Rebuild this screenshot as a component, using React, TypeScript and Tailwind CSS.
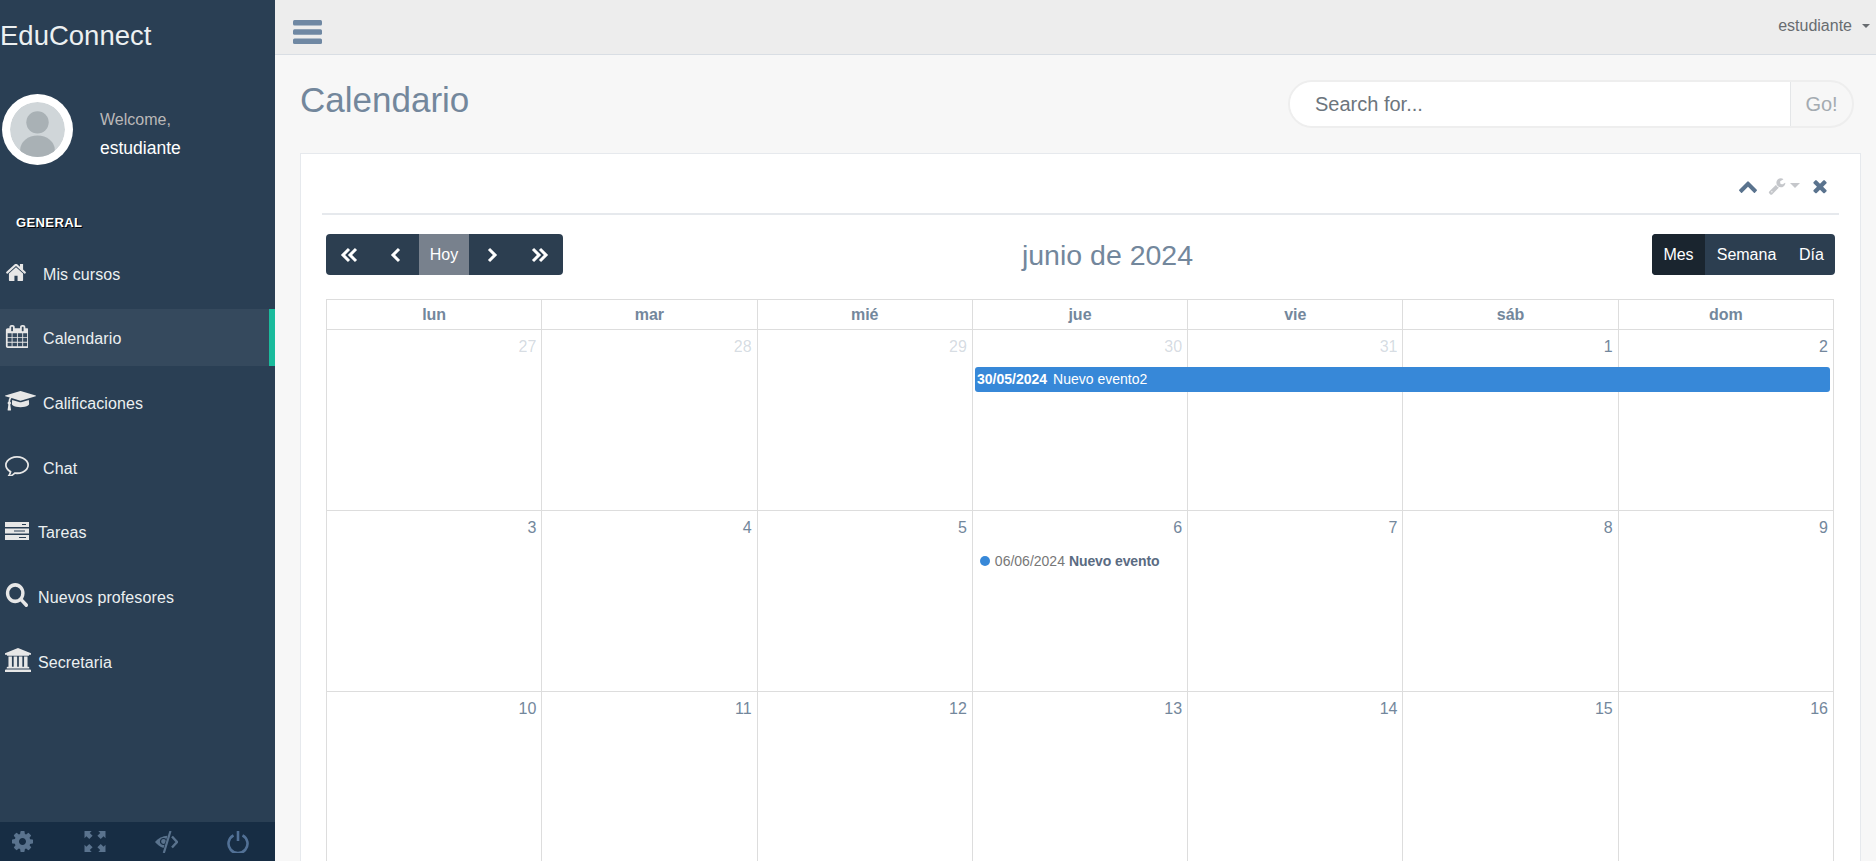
import type { ReactNode } from 'react'

function Glyph({ d, box = '0 0 1792 1792', className }: { d: string; box?: string; className: string }) {
  return (
    <svg viewBox={box} className={className} fill="currentColor" preserveAspectRatio="none">
      <path d={d} />
    </svg>
  )
}

const HOME = 'M1472 992v480q0 26-19 45t-45 19h-384v-384h-256v384h-384q-26 0-45-19t-19-45v-480q0-1 .5-3t.5-3l575-474 575 474q1 2 1 6zm223-69l-62 74q-8 9-21 11h-3q-13 0-21-7l-692-577-692 577q-12 8-24 7-13-2-21-11l-62-74q-8-10-7-23.5t11-21.5l719-599q32-26 76-26t76 26l244 204v-195q0-14 9-23t23-9h192q14 0 23 9t9 23v408l219 182q10 8 11 21.5t-7 23.5z'
const CALENDAR = 'M192 1664h288v-288h-288v288zm352 0h320v-288h-320v288zm-352-352h288v-320h-288v320zm352 0h320v-320h-320v320zm-352-384h288v-288h-288v288zm736 736h320v-288h-320v288zm-384-736h320v-288h-320v288zm768 736h288v-288h-288v288zm-384-352h320v-320h-320v320zm-352-864v-288q0-13-9.5-22.5t-22.5-9.5h-64q-13 0-22.5 9.5t-9.5 22.5v288q0 13 9.5 22.5t22.5 9.5h64q13 0 22.5-9.5t9.5-22.5zm736 864h288v-320h-288v320zm-384-384h320v-288h-320v288zm384 0h288v-288h-288v288zm32-480v-288q0-13-9.5-22.5t-22.5-9.5h-64q-13 0-22.5 9.5t-9.5 22.5v288q0 13 9.5 22.5t22.5 9.5h64q13 0 22.5-9.5t9.5-22.5zm384-64v1280q0 52-38 90t-90 38h-1408q-52 0-90-38t-38-90v-1280q0-52 38-90t90-38h128v-96q0-66 47-113t113-47h64q66 0 113 47t47 113v96h384v-96q0-66 47-113t113-47h64q66 0 113 47t47 113v96h128q52 0 90 38t38 90z'
const CAP = 'M1774 836l18 316q4 69-82 128t-235 93.5-323 34.5-323-34.5-235-93.5-82-128l18-316 574 181q22 7 48 7t48-7zm530-324q0 23-22 31l-1120 352q-4 1-10 1t-10-1l-652-206q-43 34-71 111.5t-34 178.5q63 36 63 109 0 69-58 107l58 433q2 14-8 25-9 11-24 11h-192q-15 0-24-11-10-11-8-25l58-433q-58-38-58-107 0-73 65-111 11-207 98-330l-333-104q-22-8-22-31t22-31l1120-352q4-1 10-1t10 1l1120 352q22 8 22 31z'
const COMMENT = 'M896 384q-204 0-381.5 69.5t-282 187.5-104.5 255q0 112 71.5 213.5t201.5 175.5l87 50-27 96q-24 91-70 172 152-63 275-171l43-38 57 6q69 8 130 8 204 0 381.5-69.5t282-187.5 104.5-255-104.5-255-282-187.5-381.500-69.500zm896 512q0 174-120 321.500t-326 233-450 85.500q-70 0-145-8-198 175-460 242-49 14-114 22h-5q-15 0-27-10.500t-16-27.500v-1q-3-4-.5-12t2-10 4.500-9.500l6-9 7-8.500 8-9q7-8 31-34.500t34.500-38 31-39.500 32.500-51 27-59 26-76q-157-89-247.500-220t-90.500-281q0-174 120-321.500t326-233 450-85.500 450 85.500 326 233 120 321.500z'
const SEARCH = 'M1216 832q0-185-131.500-316.500t-316.500-131.500-316.500 131.500-131.500 316.500 131.500 316.500 316.500 131.500 316.500-131.500 131.500-316.500zm512 832q0 52-38 90t-90 38q-54 0-90-38l-343-342q-179 124-399 124-143 0-273.500-55.500t-225-150-150-225-55.500-273.500 55.500-273.500 150-225 225-150 273.500-55.500 273.500 55.500 225 150 150 225 55.500 273.500q0 220-124 399l343 343q37 37 37 90z'
const BANK = 'M960 0l960 384v128h-128q0 26-20.500 45t-48.500 19h-1526q-28 0-48.500-19t-20.500-45h-128v-128zm-704 640h256v768h128v-768h256v768h128v-768h256v768h128v-768h256v768h59q28 0 48.500 19t20.500 45v64h-1664v-64q0-26 20.500-45t48.500-19h59v-768zm1595 960q28 0 48.500 19t20.500 45v128h-1920v-128q0-26 20.500-45t48.500-19h1782z'
const CHEVRON_UP = 'M1683 1331l-166 165q-19 19-45 19t-45-19l-531-531-531 531q-19 19-45 19t-45-19l-166-165q-19-19-19-45.500t19-45.500l742-741q19-19 45-19t45 19l742 741q19 19 19 45.500t-19 45.500z'
const WRENCH = 'M448 1472q0-26-19-45t-45-19-45 19-19 45 19 45 45 19 45-19 19-45zm644-420l-682 682q-37 37-90 37-52 0-91-37l-106-108q-38-36-38-90 0-53 38-91l681-681q39 98 114.500 173.500t173.500 114.500zm634-435q0 39-23 106-47 134-164.500 217.500t-258.500 83.500q-185 0-316.500-131.500t-131.500-316.500 131.500-316.500 316.500-131.500q58 0 121.500 16.500t107.500 46.500q16 11 16 28t-16 28l-293 169v224l193 107q5-3 79-48.500t135.500-81 70.500-35.500q15 0 23.500 10t8.500 25z'
const CLOSE = 'M1490 1322q0 40-28 68l-136 136q-28 28-68 28t-68-28l-294-294-294 294q-28 28-68 28t-68-28l-136-136q-28-28-28-68t28-68l294-294-294-294q-28-28-28-68t28-68l136-136q28-28 68-28t68 28l294 294 294-294q28-28 68-28t68 28l136 136q28 28 28 68t-28 68l-294 294 294 294q28 28 28 68z'
const COG = 'M1152 896q0-106-75-181t-181-75-181 75-75 181 75 181 181 75 181-75 75-181zm512-109v222q0 12-8 23t-20 13l-185 28q-19 54-39 91 35 50 107 138 10 12 10 25t-9 23q-27 37-99 108t-94 71q-12 0-26-9l-138-108q-44 23-91 38-16 136-29 186-7 28-36 28h-222q-14 0-24.500-8.500t-11.500-21.500l-28-184q-49-16-90-37l-141 107q-10 9-25 9-14 0-25-11-126-114-165-168-7-10-7-23 0-12 8-23 15-21 51-66.500t54-70.500q-27-50-41-99l-183-27q-13-2-21-12.500t-8-23.500v-222q0-12 8-23t19-13l186-28q14-46 39-92-40-57-107-138-10-12-10-24 0-10 9-23 26-36 98.500-107.500t94.500-71.500q13 0 26 10l138 107q44-23 91-38 16-136 29-186 7-28 36-28h222q14 0 24.500 8.500t11.500 21.500l28 184q49 16 90 37l142-107q9-9 24-9 13 0 25 10 129 119 165 170 7 8 7 22 0 12-8 23-15 21-51 66.500t-54 70.500q26 50 41 98l183 28q13 2 21 12.500t8 23.500z'

function BarsIcon() {
  return (
    <svg viewBox="0 0 29 24" className="mt-[9px] w-[29px] h-[24px] text-[#6F88A3]" fill="currentColor">
      <rect y="0" width="29" height="5.500" rx="1.500" />
      <rect y="9.300" width="29" height="5.500" rx="1.500" />
      <rect y="18.500" width="29" height="5.500" rx="1.500" />
    </svg>
  )
}

function ServerIcon() {
  return (
    <svg viewBox="0 0 24 18" className="w-[24px] h-[18px]" fill="currentColor">
      <path fillRule="evenodd" d="M0 0h24v5H0Zm17 2v1h4V2ZM0 6.500h24v5H0Zm9 2v1h11v-1ZM0 13h24v5H0Zm14 2v1h7v-1Z" />
    </svg>
  )
}

function FullscreenIcon() {
  return (
    <svg viewBox="0 0 22 22" className="ml-[2px] w-[22px] h-[21px]" fill="currentColor">
      <path d="M0 0h7.500L5.500 2 8.500 5 5 8.500 2 5.500 0 7.500ZM22 0v7.500l-2-2-3 3L13.500 5l3-3-2-2ZM0 22v-7.500l2 2 3-3L8.500 17l-3 3 2 2ZM22 22h-7.500l2-2-3-3 3.500-3.500 3 3 2-2Z" />
    </svg>
  )
}

function EyeCloseIcon() {
  return (
    <svg viewBox="0 0 23 22" className="w-[23px] h-[22px]">
      <path d="M0 11C3 7.500 7.500 5 12.500 4.800L8.500 17C5 16 2 13.500 0 11Z" fill="currentColor" />
      <circle cx="8.500" cy="10.500" r="3" fill="none" stroke="#172D44" strokeWidth="1.200" />
      <path d="M17 5.500 22 11l-5 5.500" fill="none" stroke="currentColor" strokeWidth="2.400" />
      <path d="M15.500 0 8.800 22" fill="none" stroke="currentColor" strokeWidth="2.200" />
    </svg>
  )
}

function PowerIcon() {
  return (
    <svg viewBox="0 0 22 22" className="w-[22px] h-[22px]" fill="none" stroke="#527196" strokeWidth="2.600">
      <path d="M6.500 4.300a9.500 9.500 0 1 0 9 0" />
      <path d="M11 0v10" />
    </svg>
  )
}

function Chevron({ dir, double }: { dir: 'left' | 'right'; double?: boolean }) {
  if (double) {
    return (
      <svg viewBox="0 0 18 16" className="w-[18px] h-[16px]" fill="none" stroke="currentColor" strokeWidth="3">
        <path d={dir === 'left' ? 'M9 2 3 8l6 6M16 2l-6 6 6 6' : 'M2 2l6 6-6 6M9 2l6 6-6 6'} />
      </svg>
    )
  }
  return (
    <svg viewBox="0 0 11 16" className="w-[11px] h-[16px]" fill="none" stroke="currentColor" strokeWidth="3">
      <path d={dir === 'left' ? 'M9 2 3 8l6 6' : 'M2 2l6 6-6 6'} />
    </svg>
  )
}

const navItems: { label: string; icon: ReactNode; active?: boolean; narrow?: boolean }[] = [
  { label: 'Mis cursos', icon: <Glyph d={HOME} box="1 280 1790 1260" className="w-[22px] h-[17px]" /> },
  { label: 'Calendario', icon: <Glyph d={CALENDAR} box="0 0 1664 1792" className="w-[23px] h-[23px]" />, active: true },
  { label: 'Calificaciones', icon: <Glyph d={CAP} box="0 128 2304 1664" className="w-[31px] h-[21px]" /> },
  { label: 'Chat', icon: <Glyph d={COMMENT} box="0 256 1792 1408" className="w-[24px] h-[20px]" /> },
  { label: 'Tareas', icon: <ServerIcon />, narrow: true },
  { label: 'Nuevos profesores', icon: <Glyph d={SEARCH} box="0 128 1728 1664" className="w-[23px] h-[24px]" />, narrow: true },
  { label: 'Secretaria', icon: <Glyph d={BANK} box="0 0 1920 1792" className="w-[26px] h-[24px]" />, narrow: true },
]

const weekDays = ['lun', 'mar', 'mié', 'jue', 'vie', 'sáb', 'dom']
const days = [27, 28, 29, 30, 31, 1, 2, 3, 4, 5, 6, 7, 8, 9, 10, 11, 12, 13, 14, 15, 16]

function Sidebar() {
  return (
    <aside className="w-[275px] shrink-0 h-full bg-[#2A3F54] flex flex-col text-[#ECF0F1]">
      <div className="h-[71px] flex items-center text-[27.5px] pt-[1px]">EduConnect</div>
      <div className="mt-[23px] pl-[2px] flex items-center">
        <div className="w-[71px] h-[71px] rounded-full bg-white p-[8px]">
          <svg viewBox="0 0 54 54" className="w-full h-full rounded-full">
            <circle cx="27" cy="27" r="27" fill="#D0D6D9" />
            <circle cx="27" cy="20" r="11" fill="#A9B1B5" />
            <ellipse cx="27" cy="47" rx="17" ry="14" fill="#A9B1B5" />
          </svg>
        </div>
        <div className="ml-[27px] pt-[8px]">
          <div className="text-[#BAB8B8] text-[16px] leading-[28px]">Welcome,</div>
          <div className="text-white text-[17.500px] leading-[28px]">estudiante</div>
        </div>
      </div>
      <h3 className="mt-[49px] pl-[16px] text-[13px] leading-[18px] font-bold text-white tracking-[0.4px] [text-shadow:1px_1px_#000]">GENERAL</h3>
      <nav className="mt-[12px] flex flex-col gap-[7.7px]">
        {navItems.map((item) => (
          <div
            key={item.label}
            className={
              item.active
                ? 'h-[57px] flex items-center pl-[5px] text-[16px] tracking-[0.1px] bg-[#35495D] border-r-[6px] border-[#1ABB9C]'
                : 'h-[57px] flex items-center pl-[5px] text-[16px] tracking-[0.1px]'
            }
          >
            <span className={item.narrow ? 'w-[33px] flex mb-[1px] text-[#E7E7E7]' : 'w-[38px] flex mb-[1px] text-[#E7E7E7]'}>{item.icon}</span>
            <span className="mt-[4px]">{item.label}</span>
          </div>
        ))}
      </nav>
      <div className="mt-auto h-[39px] bg-[#172D44] flex items-center justify-between pl-[12px] pr-[26px] text-[#5A738E]">
        <Glyph d={COG} box="128 128 1536 1536" className="w-[21px] h-[21px]" />
        <FullscreenIcon />
        <EyeCloseIcon />
        <PowerIcon />
      </div>
    </aside>
  )
}

function Calendar() {
  return (
    <div>
      <div className="flex items-center justify-between pl-[4px] pr-[4px]">
        <div className="flex h-[41px] rounded-[4px] overflow-hidden bg-[#2C3E50] text-white text-[16px]">
          <div className="w-[46.500px] flex items-center justify-center"><Chevron dir="left" double /></div>
          <div className="w-[46.500px] flex items-center justify-center"><Chevron dir="left" /></div>
          <div className="w-[50px] flex items-center justify-center bg-[#78818D]">Hoy</div>
          <div className="w-[47px] flex items-center justify-center"><Chevron dir="right" /></div>
          <div className="w-[47px] flex items-center justify-center"><Chevron dir="right" double /></div>
        </div>
        <h2 className="mt-[2px] text-[28.500px] leading-[39px]">junio de 2024</h2>
        <div className="flex h-[41px] rounded-[4px] overflow-hidden bg-[#2C3E50] text-white text-[16px]">
          <div className="w-[53px] flex items-center justify-center bg-[#1A252F]">Mes</div>
          <div className="w-[83px] flex items-center justify-center">Semana</div>
          <div className="w-[47px] flex items-center justify-center">Día</div>
        </div>
      </div>
      <div className="relative mt-[24px] ml-[4px] w-[1508px] border-t border-l border-[#DDDDDD]">
        <div className="grid grid-cols-7 h-[30px]">
          {weekDays.map((d) => (
            <div key={d} className="border-r border-b border-[#DDDDDD] flex items-center justify-center font-bold text-[16px]">{d}</div>
          ))}
        </div>
        <div className="grid grid-cols-7 auto-rows-[181px]">
          {days.map((d, i) => (
            <div key={i} className="border-r border-b border-[#DDDDDD] px-[5px] pt-[5px]">
              <div className={i < 5 ? 'text-right text-[16px] leading-[24px] text-[#73879C]/30' : 'text-right text-[16px] leading-[24px]'}>{d}</div>
              {d === 6 ? (
                <div className="mt-[11px] ml-[2px] flex items-center text-[14px] leading-[20px] whitespace-nowrap">
                  <span className="w-[10px] h-[10px] rounded-full bg-[#3788D8] mr-[5px]" />
                  <span className="text-[#777777]">06/06/2024</span>
                  <b className="ml-[4px] tracking-[-0.1px] text-[#5A6B82]">Nuevo evento</b>
                </div>
              ) : null}
            </div>
          ))}
        </div>
        <div className="absolute left-[648px] top-[67px] w-[855px] h-[25px] rounded-[3px] bg-[#3788D8] text-white text-[14px] leading-[25px] pl-[2px] whitespace-nowrap">
          <b>30/05/2024</b>
          <span className="ml-[6px]">Nuevo evento2</span>
        </div>
      </div>
    </div>
  )
}

export default function App() {
  return (
    <div className="flex w-[1876px] h-[861px] overflow-hidden font-['Liberation_Sans',Arial,sans-serif] text-[#73879C]">
      <Sidebar />
      <main className="flex-1 min-w-0 flex flex-col bg-[#F7F7F7]">
        <header className="h-[55px] shrink-0 bg-[#EDEDED] border-b border-[#D9DEE4] flex items-center justify-between pl-[18px] pr-[6px]">
          <BarsIcon />
          <div className="flex items-center text-[16px] text-[#686C70] mb-[2px]">
            estudiante
            <span className="ml-[10px] w-0 h-0 border-x-[4px] border-x-transparent border-t-[4px] border-t-[#686C70]" />
          </div>
        </header>
        <div className="pl-[25px] pr-[15px] pt-[25px]">
          <div className="flex items-start justify-between h-[73px]">
            <h1 className="text-[35px] leading-[40px]">Calendario</h1>
            <div className="mr-[7px] flex w-[566px] h-[48px] rounded-full border-2 border-[#EEEEEE] overflow-hidden text-[20px]">
              <div className="flex-1 bg-white flex items-center pl-[25px] text-[#6C757D]">Search for...</div>
              <div className="w-[62px] flex items-center justify-center border-l border-[#E4E6E8] text-[#A4ABB1]">Go!</div>
            </div>
          </div>
          <section className="bg-white border border-[#E6E9ED] px-[21px]">
            <div className="h-[61px] pt-[4px] border-b-2 border-[#E6E9ED] flex items-center justify-end pr-[9px]">
              <Glyph d={CHEVRON_UP} className="w-[20px] h-[20px] text-[#5A738E]" />
              <Glyph d={WRENCH} className="ml-[10px] w-[18px] h-[18px] text-[#C5C7CB]" />
              <span className="ml-[4px] w-0 h-0 border-x-[5px] border-x-transparent border-t-[5px] border-t-[#C5C7CB]" />
              <Glyph d={CLOSE} className="ml-[10px] w-[20px] h-[20px] text-[#5A738E]" />
            </div>
            <div className="pt-[19px]">
              <Calendar />
            </div>
          </section>
        </div>
      </main>
    </div>
  )
}
